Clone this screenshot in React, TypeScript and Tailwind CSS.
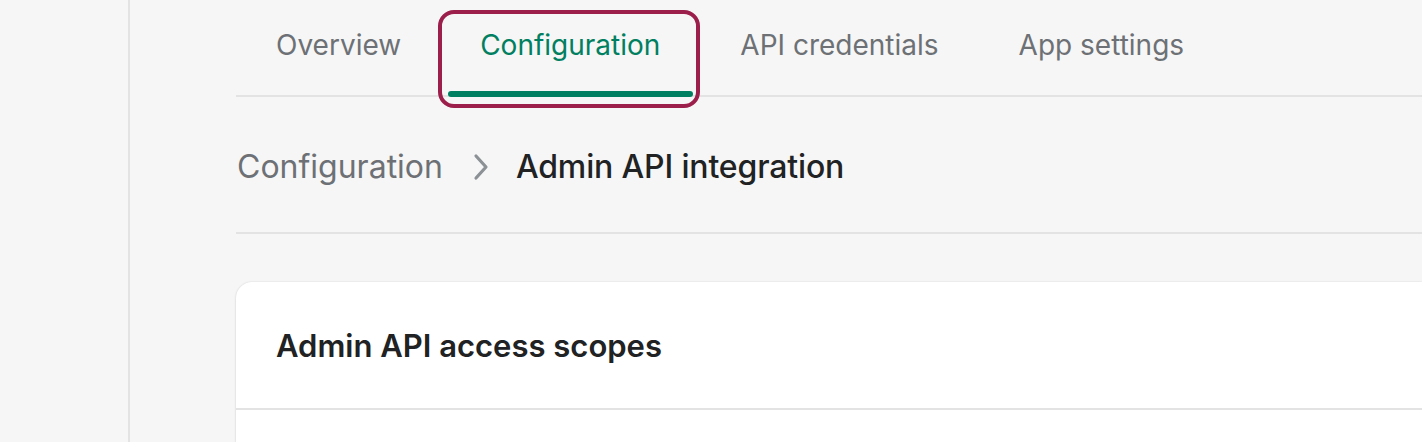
import React from "react";

export default function App() {
  const tabs = ["Overview", "Configuration", "API credentials", "App settings"];
  return (
    <div
      className="w-[1422px] h-[442px] overflow-hidden bg-[#f6f6f6] flex"
      style={{ fontFamily: "Inter, 'Noto Sans', sans-serif" }}
    >
      <div className="w-[130px] shrink-0 border-r-2 border-[#e3e3e3]" />
      <div className="flex-1 pl-[106px] flex flex-col">
        <div className="relative flex gap-[14px] pl-[7px] h-[97px] border-b-2 border-[#e3e3e3]">
          {tabs.map((t, i) => (
            <div
              key={t}
              className={
                "relative px-[33px] pt-[28px] text-[28px] leading-[34px] " +
                (i === 1 ? "text-[#008060] pl-[32px]" : "text-[#6d7175]")
              }
            >
              {t}
              {i === 1 && (
                <div className="absolute left-0 right-0 bottom-[-2px] h-[6px] rounded-[3px] bg-[#008060]" />
              )}
            </div>
          ))}
          <div className="absolute left-[202px] top-[10px] w-[262px] h-[98px] rounded-[16px] border-[4px] border-[#9b1f4a] pointer-events-none" />
        </div>
        <div className="flex items-center h-[137px] pl-[1px] pt-[4px] border-b-2 border-[#e3e3e3]">
          <span className="text-[32px] text-[#6d7175]">Configuration</span>
          <svg width="18" height="28" viewBox="0 0 18 28" className="ml-[29px] mr-[26px]">
            <path d="M4 3 L14 14 L4 25" fill="none" stroke="#8c9196" strokeWidth="3.2" strokeLinecap="round" strokeLinejoin="round" />
          </svg>
          <span className="text-[32px] text-[#202223] font-medium tracking-[-0.15px]">Admin API integration</span>
        </div>
        <div className="mt-[48px] bg-white rounded-tl-[16px] shadow-[0_0_2px_rgba(0,0,0,0.12),0_1px_3px_rgba(0,0,0,0.08)] flex-1">
          <div className="h-[128px] flex items-center pl-[40px] pt-[2px] border-b-2 border-[#e3e3e3]">
            <span className="text-[31px] font-semibold text-[#202223]">Admin API access scopes</span>
          </div>
        </div>
      </div>
    </div>
  );
}
